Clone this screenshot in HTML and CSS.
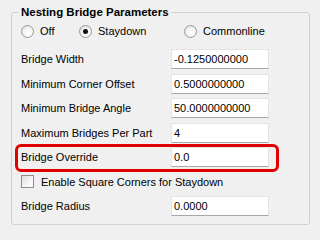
FILE: index.html
```html
<!DOCTYPE html>
<html>
<head>
<meta charset="utf-8">
<link rel="stylesheet" href="styles.css">
</head>
<body>
<div class="page">
  <div class="group">
    <div class="group-title">Nesting Bridge Parameters</div>
    <div class="radios">
      <label class="opt opt-off"><span class="radio"></span><span>Off</span></label>
      <label class="opt opt-stay"><span class="radio checked"></span><span>Staydown</span></label>
      <label class="opt"><span class="radio"></span><span>Commonline</span></label>
    </div>
    <div class="row"><span class="lbl">Bridge Width</span><span class="field">-0.1250000000</span></div>
    <div class="row"><span class="lbl">Minimum Corner Offset</span><span class="field">0.5000000000</span></div>
    <div class="row"><span class="lbl">Minimum Bridge Angle</span><span class="field">50.0000000000</span></div>
    <div class="row"><span class="lbl">Maximum Bridges Per Part</span><span class="field">4</span></div>
    <div class="row highlight"><span class="lbl">Bridge Override</span><span class="field">0.0</span></div>
    <div class="row"><label class="check"><span class="box"></span><span>Enable Square Corners for Staydown</span></label></div>
    <div class="row"><span class="lbl">Bridge Radius</span><span class="field">0.0000</span></div>
  </div>
</div>
</body>
</html>
```

FILE: styles.css
```css
html, body {
  margin: 0;
  padding: 0;
  background: #f0f0f0;
}
body {
  font-family: "Liberation Sans", Arial, sans-serif;
  font-size: 11px;
  color: #000;
}
.page {
  padding: 12px 10px 0 11px;
}
.group {
  position: relative;
  border: 1px solid #d0d0d0;
  border-radius: 3px;
  padding: 8px 0 6px 9px;
}
.group-title {
  position: absolute;
  top: -8px;
  left: 7px;
  padding: 0 2px;
  background: #f0f0f0;
  font-weight: bold;
  font-size: 11.5px;
  line-height: 14px;
}
.radios {
  display: flex;
  align-items: center;
  height: 25.75px;
  align-items: flex-start;
}
.opt {
  display: flex;
  align-items: center;
  gap: 6px;
  height: 20px;
}
.opt-off { width: 58px; }
.opt-stay { width: 105px; }
.radio {
  width: 11px;
  height: 11px;
  border-radius: 50%;
  border: 1px solid #9a9a9a;
  background: radial-gradient(circle at 60% 60%, #ffffff 0%, #f4f4f4 45%, #d6d6d6 100%);
  display: flex;
  align-items: center;
  justify-content: center;
  box-sizing: content-box;
}
.radio.checked::after {
  content: "";
  width: 5px;
  height: 5px;
  border-radius: 50%;
  background: #111;
}
.row {
  position: relative;
  display: flex;
  align-items: center;
  height: 24.5px;
}
.lbl {
  width: 150px;
}
.field {
  box-sizing: border-box;
  width: 98px;
  height: 20px;
  background: #fff;
  border: 1px solid #e4e4e4;
  border-bottom-color: #a8a8a8;
  padding: 0 2px;
  display: flex;
  align-items: center;
}
.highlight::after {
  content: "";
  position: absolute;
  left: -6px;
  top: -1px;
  width: 264px;
  height: 28px;
  box-sizing: border-box;
  border: 3px solid #e00000;
  border-radius: 6px;
}
.check {
  display: flex;
  align-items: center;
  gap: 7px;
}
.box {
  width: 11px;
  height: 11px;
  border: 1px solid #8e8e8e;
  background: linear-gradient(135deg, #dcdcdc 0%, #f6f6f6 60%, #ffffff 100%);
}
```
